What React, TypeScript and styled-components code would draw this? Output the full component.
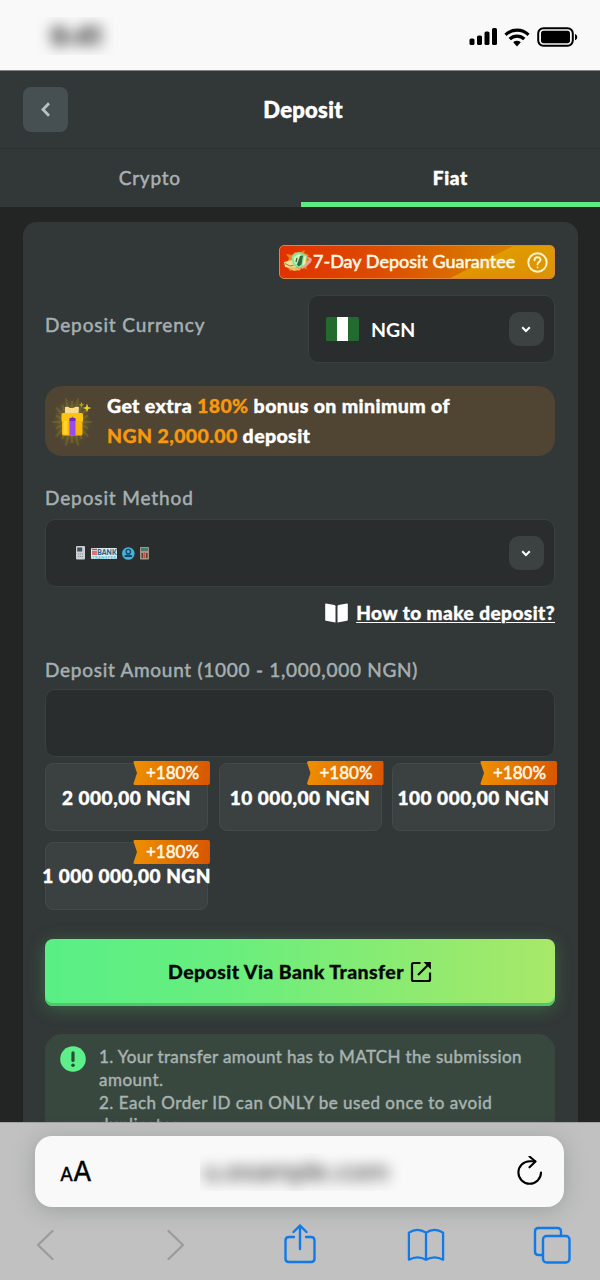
import React from "react";
import styled, { createGlobalStyle } from "styled-components";

const Global = createGlobalStyle`
  * { box-sizing: border-box; }
  html, body { margin: 0; padding: 0; }
  body { font-family: Lato, "Open Sans", sans-serif; background: #232524; }
  button { font: inherit; border: 0; padding: 0; margin: 0; }
`;

const Screen = styled.div`
  width: 600px;
  height: 1280px;
  overflow: hidden;
  display: flex;
  flex-direction: column;
  background: #232524;
`;

const StatusBar = styled.header`
  flex: none;
  height: 71px;
  padding: 2px 21px 0 36px;
  display: flex;
  align-items: center;
  justify-content: space-between;
  background: #f9f9f9;
  border-bottom: 1px solid #828685;
`;

const Masked = styled.div<{ $w: number; $blur: number }>`
  width: ${(p) => p.$w}px;
  height: 38px;
  overflow: hidden;
  display: flex;
  align-items: center;
  justify-content: center;
  span {
    filter: blur(${(p) => p.$blur}px);
    white-space: nowrap;
  }
`;

const Clock = styled.span`
  font: 800 27px "Inter", sans-serif;
  letter-spacing: -1.5px;
  color: #444;
`;

const Address = styled.span`
  margin-right: 10px;
  font: 600 27px "Inter", sans-serif;
  letter-spacing: -1.2px;
  color: #666;
`;

const TitleBar = styled.div`
  flex: none;
  height: 78px;
  padding: 0 17px 0 23px;
  display: grid;
  grid-template-columns: 45px 1fr 45px;
  align-items: center;
  background: #323737;
  border-bottom: 1px solid #2a2e2e;
`;

const BackButton = styled.button`
  width: 45px;
  height: 45px;
  border-radius: 8px;
  display: grid;
  place-items: center;
  background: #464f51;
`;

const Title = styled.h1`
  margin: 0;
  text-align: center;
  font-size: 22px;
  font-weight: 900;
  letter-spacing: 0.3px;
  -webkit-text-stroke: 0.5px #fff;
  color: #fff;
`;

const Tabs = styled.nav`
  flex: none;
  height: 58px;
  display: flex;
  background: #323737;
`;

const Tab = styled.div<{ $active?: boolean }>`
  flex: 1;
  display: flex;
  align-items: center;
  justify-content: center;
  padding-top: 4px;
  font-size: 19px;
  font-weight: ${(p) => (p.$active ? 900 : 400)};
  letter-spacing: ${(p) => (p.$active ? 0.6 : 0.75)}px;
  -webkit-text-stroke: 0.5px currentColor;
  color: ${(p) => (p.$active ? "#fff" : "#a9b1b4")};
  margin-left: ${(p) => (p.$active ? 1 : 0)}px;
  border-bottom: 5px solid ${(p) => (p.$active ? "#5bea82" : "transparent")};
`;

const Body = styled.main`
  flex: 1;
  min-height: 0;
  overflow: hidden;
  padding: 15px 22px 0 23px;
`;

const Panel = styled.section`
  height: 1000px;
  padding: 23px 23px 0 22px;
  border-radius: 14px;
  background: #323737;
  display: flex;
  flex-direction: column;
`;

const Guarantee = styled.div`
  flex: none;
  align-self: flex-end;
  width: 276px;
  height: 34px;
  padding: 0 6px 0 3px;
  display: flex;
  align-items: center;
  border-radius: 5px;
  border: 1px solid #e0853f;
  background:
    linear-gradient(153deg, transparent 69%, rgba(226, 165, 0, 0.75) 69.5%, rgba(226, 150, 0, 0.2) 100%),
    linear-gradient(90deg, #e13100 0%, #dd4b02 35%, #d97300 70%, #db9300 100%);
  color: #fff8e4;
  span {
    flex: 1;
    padding-bottom: 2px;
    font-size: 18px;
    font-weight: 400;
    letter-spacing: 0.01px;
    -webkit-text-stroke: 0.55px #fff8e4;
    white-space: nowrap;
  }
`;

const CurrencyRow = styled.div`
  margin-top: 16px;
  display: flex;
  justify-content: space-between;
`;

const Label = styled.div<{ $top?: number; $ls?: number }>`
  height: 24px;
  line-height: 24px;
  margin-top: ${(p) => p.$top ?? 0}px;
  font-size: 19px;
  font-weight: 400;
  letter-spacing: ${(p) => p.$ls ?? 0.88}px;
  -webkit-text-stroke: 0.5px #a6afb1;
  color: #a6afb1;
  white-space: nowrap;
`;

const Field = styled.div<{ $w?: number; $top?: number; $pl?: number }>`
  flex: none;
  width: ${(p) => (p.$w ? p.$w + "px" : "100%")};
  height: 68px;
  margin-top: ${(p) => p.$top ?? 0}px;
  padding: 0 10px 0 ${(p) => p.$pl ?? 17}px;
  display: flex;
  align-items: center;
  border: 1px solid #3a4040;
  border-radius: 10px;
  background: #292d2d;
`;

const CurrencyCode = styled.span`
  margin-left: 12px;
  font-size: 19.5px;
  font-weight: 700;
  color: #fff;
`;

const DropButton = styled.button`
  margin-left: auto;
  width: 35px;
  height: 34px;
  padding-right: 2px;
  border-radius: 10px;
  display: grid;
  place-items: center;
  background: #3c4141;
`;

const Bonus = styled.div`
  flex: none;
  height: 70px;
  margin-top: 23px;
  padding-left: 6px;
  display: flex;
  align-items: center;
  border-radius: 17px;
  background: #504433;
  p {
    margin: 0 0 0 14px;
    font-size: 19.5px;
    line-height: 30px;
    font-weight: 900;
    letter-spacing: 0.38px;
    -webkit-text-stroke: 0.4px currentColor;
    color: #fff;
    white-space: nowrap;
  }
  em {
    font-style: normal;
    color: #f7980d;
    -webkit-text-stroke: 0.3px #f7980d;
  }
`;

const HelpLink = styled.a`
  margin-top: 14px;
  height: 24px;
  display: flex;
  align-items: center;
  justify-content: flex-end;
  gap: 8px;
  font-size: 19px;
  line-height: 24px;
  font-weight: 900;
  letter-spacing: 0.45px;
  -webkit-text-stroke: 0.4px #fff;
  color: #fff;
  span {
    text-decoration: underline;
    text-decoration-thickness: 1px;
    text-underline-offset: 2px;
  }
`;

const AmountGrid = styled.div`
  margin-top: 6px;
  display: grid;
  grid-template-columns: repeat(3, 163px);
  column-gap: 10.5px;
  row-gap: 11px;
`;

const Amount = styled.button`
  position: relative;
  height: 68px;
  display: flex;
  align-items: center;
  justify-content: center;
  border: 1px solid #444949;
  border-radius: 8px;
  background: #3b4040;
  color: #fff;
  font-size: 19px;
  font-weight: 900;
  letter-spacing: 0.52px;
  -webkit-text-stroke: 0.4px #fff;
  white-space: nowrap;
  &:nth-child(n + 4) { padding-bottom: 2px; }
`;

const AmountText = styled.span`
  flex: none;
`;

const Ribbon = styled.span`
  position: absolute;
  top: -3px;
  right: -3px;
  width: 77px;
  height: 24px;
  padding-left: 2px;
  line-height: 23px;
  text-align: center;
  border-radius: 2px;
  font-size: 17px;
  font-weight: 400;
  letter-spacing: 0;
  color: #fff8e8;
  -webkit-text-stroke: 0.5px #fff8e8;
  background: linear-gradient(100deg, #f09000, #e07200 55%, #d85400);
  clip-path: polygon(0 0, 100% 0, 100% 100%, 0 100%, 4px 50%);
`;

const Submit = styled.button`
  flex: none;
  height: 67px;
  margin-top: 29px;
  padding-bottom: 2px;
  display: flex;
  align-items: center;
  justify-content: center;
  gap: 6px;
  border-radius: 8px;
  color: #050805;
  font-size: 19.5px;
  font-weight: 900;
  letter-spacing: 0.4px;
  -webkit-text-stroke: 0.3px #050805;
  background: linear-gradient(90deg, #59ef86 0%, #68ee7e 35%, #8beb71 70%, #a8e868 100%);
  box-shadow: inset 0 -3px 0 #4cc968, 0 3px 18px rgba(80, 210, 110, 0.3);
`;

const Notice = styled.div`
  flex: none;
  height: 300px;
  margin-top: 28px;
  padding: 12px 15px;
  display: flex;
  gap: 13px;
  border-radius: 17px;
  background: #38483f;
  color: #a9b3b1;
  font-size: 17px;
  line-height: 22.8px;
  font-weight: 400;
  letter-spacing: 0.5px;
  -webkit-text-stroke: 0.45px #a9b3b1;
  p { margin: 0; white-space: nowrap; }
`;

const TightLine = styled.span`
  letter-spacing: 0.36px;
`;

const BrowserBar = styled.footer`
  flex: none;
  height: 158px;
  padding: 13px 36px 0 35px;
  background: #c1c1c1;
  border-top: 1px solid #a3a5a4;
`;

const UrlBox = styled.div`
  height: 71px;
  padding: 0 21px 0 25px;
  display: flex;
  align-items: center;
  justify-content: space-between;
  border-radius: 17px;
  background: #f9f9f9;
  box-shadow: 0 3px 22px rgba(60, 75, 70, 0.28);
`;

const TextSize = styled.div`
  width: 26px;
  display: flex;
  align-items: baseline;
  font-family: Inter, sans-serif;
  font-weight: 400;
  color: #000;
  -webkit-text-stroke: 0.4px #000;
  small { font-size: 19px; }
  big { font-size: 27px; }
`;

const Toolbar = styled.div`
  margin: 14px -8px 0 -10px;
  display: flex;
  align-items: center;
  justify-content: space-between;
  height: 48px;
`;

const ToolSlot = styled.div<{ $shift?: number }>`
  width: 40px;
  padding-left: ${(p) => p.$shift ?? 0}px;
  display: flex;
  justify-content: center;
`;

const ChevronDown = () => (
  <svg width="10" height="7" viewBox="0 0 10 7" fill="none" stroke="#fff" strokeWidth="2">
    <path d="M1.2 1.2 5 5 8.8 1.2" />
  </svg>
);

const StatusIcons = () => (
  <svg width="110" height="22" viewBox="0 0 110 22">
    <g>
      <rect x="0.5" y="13.5" width="5" height="6.5" rx="1.6" />
      <rect x="8" y="10.5" width="5" height="9.5" rx="1.6" />
      <rect x="15.5" y="6.5" width="5" height="13.5" rx="1.6" />
      <rect x="23" y="3" width="5" height="17" rx="1.6" />
    </g>
    <g fill="none" stroke="#000" strokeWidth="3.2">
      <path d="M36.5 9.8a16.5 16.5 0 0 1 23 0" />
      <path d="M40.7 14a10.5 10.5 0 0 1 14.6 0" />
    </g>
    <path d="M44.2 17.3a5.6 5.6 0 0 1 7.6 0L48 21.6z" />
    <rect x="69.2" y="3.2" width="34.6" height="17.6" rx="5.2" fill="none" stroke="#000" strokeWidth="2" />
    <rect x="72" y="5.8" width="29" height="12.4" rx="2.6" />
    <path d="M106 9c3 1.2 3 5 0 6.2z" />
  </svg>
);

const MoneyIcon = () => (
  <svg width="30" height="24" viewBox="0 0 30 24">
    <path d="M3 15 6 8l-3-4 6 1 3-3 3 1 7-3-1 3 5 2-2 4 4 3-5 3 1 4-5-1-3 3-3-2-6 2z" fill="#f0a020" opacity=".75" />
    <path d="m1 12 8-2 5 4-2 5-10-2z" fill="#f0dc9c" />
    <path d="m2 13.500 5 2.500 6-1" stroke="#a87d28" fill="none" />
    <path d="m18 16 8-6-3-3q8 0 5 5-3 4-9 7z" fill="#eba690" />
    <path d="m5 17.500 7-.5 6 2.500-7 1.500z" fill="#edc265" />
    <path d="M8.500 6.500Q12 2 17 2l7 3.500-1 8-6 5-7-3z" fill="#8fe0a4" />
    <path d="m10.500 7.500 5-3.500 3 1.500-5 9-2-2z" fill="#d3f7b0" />
    <path d="M17 6l3-.5-1.500 9-3 2-1.500-2z" fill="#2f6b3d" />
    <path d="m14 8-1 4" stroke="#2f6b3d" strokeWidth="1.300" />
    <path d="m21 6.500 2-.5-1 8-2.500 2z" fill="#eef2ab" />
  </svg>
);

const HelpIcon = () => (
  <svg width="21" height="21" viewBox="0 0 21 21" fill="none" stroke="#fff3d0" strokeWidth="1.9">
    <circle cx="10.5" cy="10.5" r="9.2" />
    <path d="M7.5 8.2c0-4 6-3.8 6-.4 0 2.2-3 2.2-3 4.6" strokeLinecap="round" />
    <circle cx="10.5" cy="15.3" r=".5" fill="#fff3d0" strokeWidth="1" />
  </svg>
);

const Flag = () => (
  <svg width="33" height="24" viewBox="0 0 33 24">
    <rect width="33" height="24" rx="1.5" fill="#236a2e" />
    <rect x="11" width="11" height="24" fill="#fff" />
  </svg>
);

const Gift = () => (
  <svg width="42" height="54" viewBox="0 0 42 54">
    <defs>
      <radialGradient id="glow">
        <stop offset="0" stopColor="#b9a51c" stopOpacity=".7" />
        <stop offset="1" stopColor="#8d8529" stopOpacity="0" />
      </radialGradient>
    </defs>
    <ellipse cx="21" cy="28" rx="19" ry="24" fill="url(#glow)" />
    <g stroke="#8d8529" strokeWidth="2.2" opacity=".35">
      {Array.from({ length: 20 }, (_, i) => {
        const a = (i * Math.PI) / 10;
        const r = i % 2 ? 21 : 25;
        return (
          <line
            key={i}
            x1={21 + Math.cos(a) * 11}
            y1={28 + Math.sin(a) * 11}
            x2={21 + Math.cos(a) * r * 0.8}
            y2={28 + Math.sin(a) * r}
          />
        );
      })}
    </g>
    <path d="M14 13q3-1 5 1h3q3-2 6-1l-.5 7H14z" fill="#f8dc8a" />
    <rect x="10.5" y="19" width="21.5" height="9" rx="1.5" fill="#fdc311" />
    <rect x="11" y="27" width="20.5" height="14.5" rx="1.5" fill="#f9b608" />
    <rect x="12.5" y="27" width="4" height="13.5" fill="#ffd32d" />
    <path d="M18.500 25 21.500 22.500l3 2.500v16.500h-6z" fill="#9a4bee" />
    <path d="M18.500 24h6v3h-6z" fill="#6b2cc0" />
    <path d="m36 9.500 1.100 3.400L40.500 14l-3.400 1.100L36 18.500l-1.100-3.400L31.500 14l3.400-1.100z" fill="#f0d425" />
    <path d="m30.500 8 .8 2 2 .8-2 .8-.8 2-.8-2-2-.8 2-.8z" fill="#a7ab27" />
  </svg>
);

const MethodIcons = () => (
  <svg width="76" height="16" viewBox="0 0 76 16">
    <rect x="1" y="1" width="9" height="13.5" rx="1" fill="#cdd0d3" />
    <rect x="2.2" y="2.5" width="5" height="4" fill="#454f66" />
    <path d="M3 9h5M3 11.5h5" stroke="#8c8f94" strokeDasharray="1.2 .8" />
    <rect x="16" y="3" width="26" height="11" rx="1" fill="#d9e9ef" />
    <path d="M17 4.500h5M17 7h5M17 9h5" stroke="#d44d4b" strokeWidth="1.4" />
    <text x="22.2" y="9.6" fontSize="6.8" fontWeight="900" fill="#27607d" textLength="19.5" fontFamily="Lato, sans-serif">BANK</text>
    <text x="17" y="13.6" fontSize="4.2" fontWeight="700" fill="#65b7d0" textLength="24" fontFamily="Lato, sans-serif">TRANSFER</text>
    <circle cx="53.3" cy="8.5" r="6.3" fill="#43b3dc" />
    <circle cx="53.3" cy="6.6" r="2.2" fill="none" stroke="#174463" strokeWidth="1.3" />
    <path d="M49.500 12v-1.500l2.500-1h2.600l2.500 1V12z" fill="#174463" />
    <rect x="65" y="2" width="9" height="12.5" rx=".8" fill="#a69687" />
    <rect x="66" y="3" width="7" height="3" fill="#4c7b6c" />
    <path d="M67.300 8v5M71.800 8v5" stroke="#593c38" strokeWidth="1.5" />
    <path d="M69.500 7.500v5.500" stroke="#cd4a40" strokeWidth="1.5" />
  </svg>
);

const BookSolid = () => (
  <svg width="23" height="20" viewBox="0 0 23 20" fill="#fff">
    <path d="M1 .4 9.500 2q1 .3 1 1.200V19.500L1 17.800q-.8-.2-.8-1V1.200Q.2.300 1 .4z" />
    <path d="M22 .4 13.500 2q-1 .3-1 1.200V19.500l9.500-1.700q.8-.2.800-1V1.200q0-.9-.8-.8z" />
  </svg>
);

const OpenIcon = () => (
  <svg width="22" height="22" viewBox="0 0 22 22" fill="none" stroke="#050805" strokeWidth="2.2">
    <path d="M10.500 2H3.500Q2 2 2 3.500v15Q2 20 3.500 20h15q1.500 0 1.500-1.500v-7" />
    <path d="M8 14 19 3" />
    <path d="M13.500 1.100H20.900V8.500z" fill="#050805" stroke="none" />
  </svg>
);

const AlertIcon = () => (
  <svg width="26" height="26" viewBox="0 0 26 26">
    <circle cx="13" cy="13" r="12.8" fill="#5df08a" />
    <path d="M13 6.800v7.700" stroke="#2d4a38" strokeWidth="3.2" strokeLinecap="round" />
    <circle cx="13" cy="19.3" r="1.8" fill="#2d4a38" />
  </svg>
);

const amounts = ["2 000,00 NGN", "10 000,00 NGN", "100 000,00 NGN", "1 000 000,00 NGN"];

export default function App() {
  return (
    <Screen>
      <Global />
      <StatusBar>
        <Masked $w={78} $blur={7}><Clock>9:41</Clock></Masked>
        <StatusIcons />
      </StatusBar>
      <TitleBar>
        <BackButton aria-label="Back">
          <svg width="11" height="15" viewBox="0 0 11 15" fill="none" stroke="#b9c0c2" strokeWidth="2.8">
            <path d="M9 1.200 3 7.500 9 13.800" />
          </svg>
        </BackButton>
        <Title>Deposit</Title>
      </TitleBar>
      <Tabs>
        <Tab>Crypto</Tab>
        <Tab $active>Fiat</Tab>
      </Tabs>
      <Body>
        <Panel>
          <Guarantee>
            <MoneyIcon />
            <span>7-Day Deposit Guarantee</span>
            <HelpIcon />
          </Guarantee>
          <CurrencyRow>
            <Label $top={18}>Deposit Currency</Label>
            <Field $w={247}>
              <Flag />
              <CurrencyCode>NGN</CurrencyCode>
              <DropButton aria-label="Choose currency"><ChevronDown /></DropButton>
            </Field>
          </CurrencyRow>
          <Bonus>
            <Gift />
            <p>
              Get extra <em>180%</em> bonus on minimum of<br />
              <em>NGN 2,000.00</em> deposit
            </p>
          </Bonus>
          <Label $top={30}>Deposit Method</Label>
          <Field $top={9} $pl={29}>
            <MethodIcons />
            <DropButton aria-label="Choose method"><ChevronDown /></DropButton>
          </Field>
          <HelpLink><BookSolid /><span>How to make deposit?</span></HelpLink>
          <Label $top={33} $ls={0.73}>Deposit Amount (1000 - 1,000,000 NGN)</Label>
          <Field $top={7} />
          <AmountGrid>
            {amounts.map((a) => (
              <Amount key={a}>
                <AmountText>{a}</AmountText>
                <Ribbon>+180%</Ribbon>
              </Amount>
            ))}
          </AmountGrid>
          <Submit>Deposit Via Bank Transfer <OpenIcon /></Submit>
          <Notice>
            <AlertIcon />
            <p>
              <TightLine>1. Your transfer amount has to MATCH the submission</TightLine><br />
              amount.<br />
              2. Each Order ID can ONLY be used once to avoid<br />
              duplicates.
            </p>
          </Notice>
        </Panel>
      </Body>
      <BrowserBar>
        <UrlBox>
          <TextSize><small>A</small><big>A</big></TextSize>
          <Masked $w={202} $blur={7}><Address>u.example.com</Address></Masked>
          <svg width="28" height="32" viewBox="0 0 28 32" fill="none" stroke="#000" strokeWidth="2.1" strokeLinecap="round" strokeLinejoin="round">
            <path d="M26 16.500A11.300 11.300 0 1 1 14.700 5.200h5.500" />
            <path d="M14.500 0.500l6 5-6 5.800" />
          </svg>
        </UrlBox>
        <Toolbar>
          <ToolSlot>
            <svg width="20" height="34" viewBox="0 0 20 34" fill="none" stroke="#9c9c9c" strokeWidth="2.4" strokeLinecap="round" strokeLinejoin="round"><path d="M17.500 3 3 17l14.500 14" /></svg>
          </ToolSlot>
          <ToolSlot $shift={9}>
            <svg width="20" height="34" viewBox="0 0 20 34" fill="none" stroke="#9c9c9c" strokeWidth="2.4" strokeLinecap="round" strokeLinejoin="round"><path d="M2.500 3 17 17 2.500 31" /></svg>
          </ToolSlot>
          <ToolSlot $shift={2}>
            <svg width="34" height="42" viewBox="0 0 34 42" fill="none" stroke="#117ae8" strokeWidth="2.4" strokeLinecap="round" strokeLinejoin="round">
              <path d="M11 13H6q-3.500 0-3.500 3.500v18Q2.500 38 6 38h22q3.500 0 3.500-3.500v-18Q31.500 13 28 13h-5" />
              <path d="M17 25V1.500M10.500 8 17 1.500 23.500 8" />
            </svg>
          </ToolSlot>
          <ToolSlot $shift={2}>
            <svg width="40" height="36" viewBox="0 0 40 36" fill="none" stroke="#117ae8" strokeWidth="2.4" strokeLinejoin="round">
              <path d="M20 5Q11-1 2 5v28.500q9-5 18 0 9-5 18 0V5Q29-1 20 5zV33.500" />
            </svg>
          </ToolSlot>
          <ToolSlot>
            <svg width="38" height="38" viewBox="0 0 38 38" fill="none" stroke="#117ae8" strokeWidth="2.4">
              <path d="M10 29H5.500Q2 29 2 25.500V5.500Q2 2 5.500 2h19Q28 2 28 5.500V10" />
              <rect x="10" y="10" width="26.5" height="26.5" rx="3.5" />
            </svg>
          </ToolSlot>
        </Toolbar>
      </BrowserBar>
    </Screen>
  );
}
